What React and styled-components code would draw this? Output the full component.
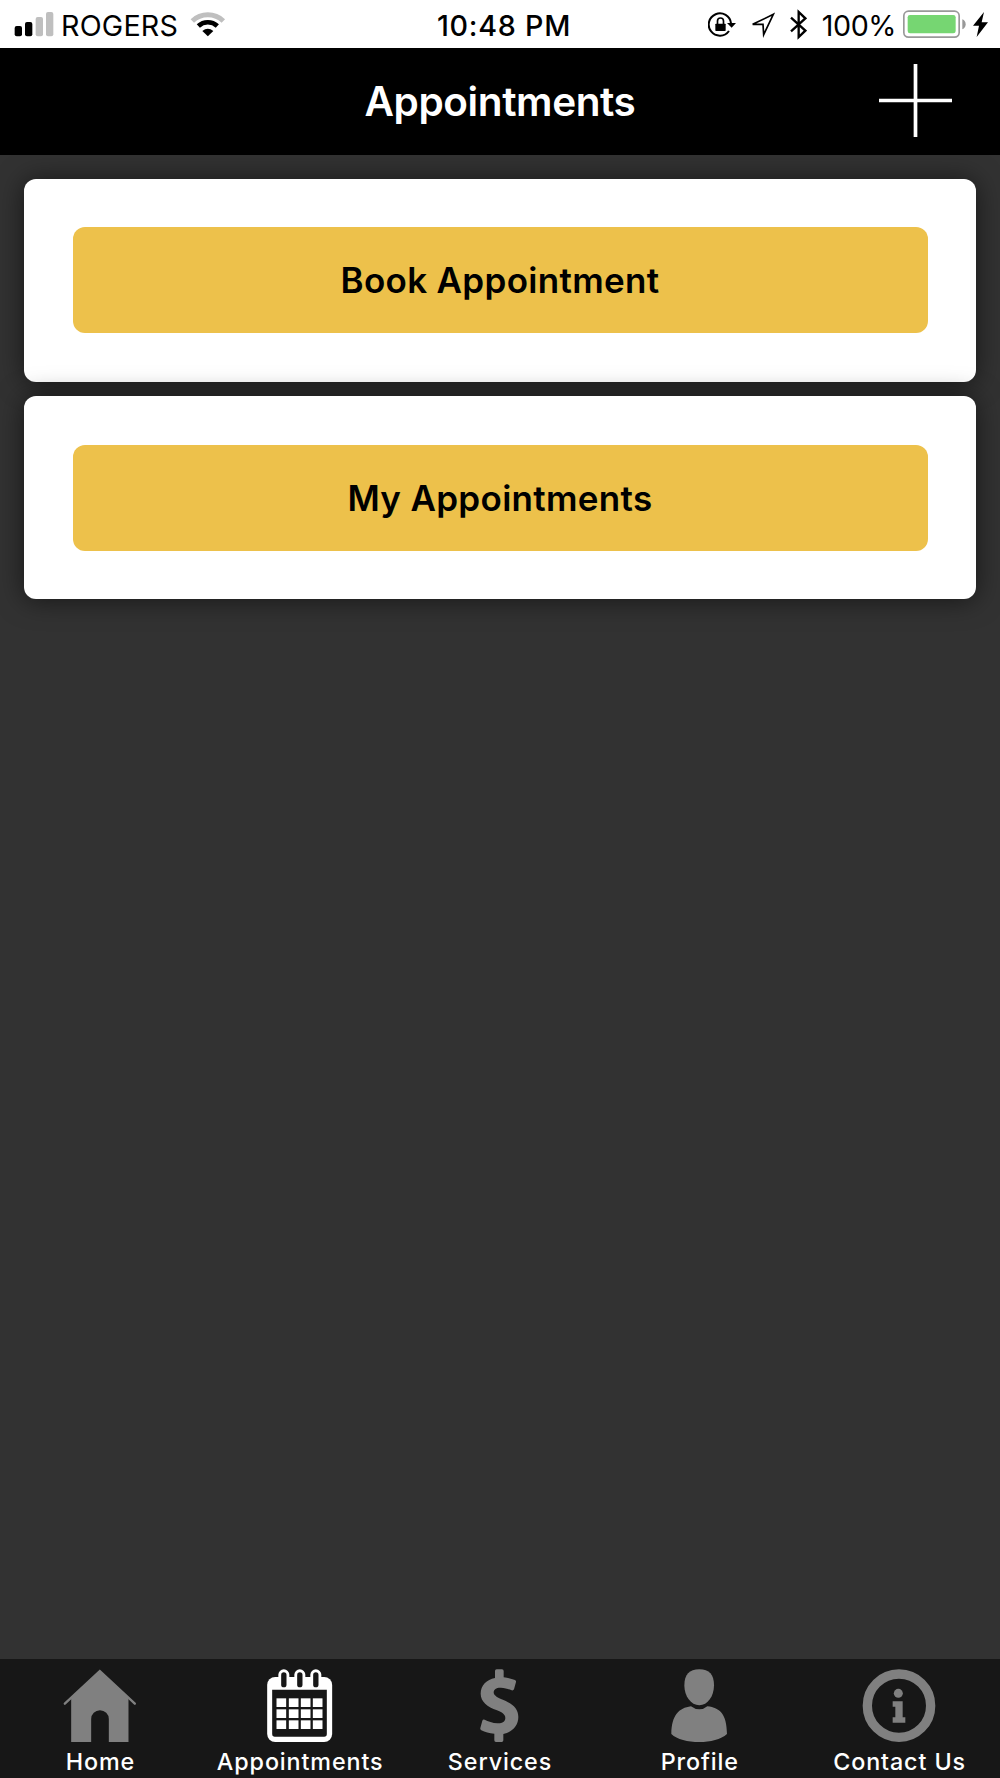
import styled, { createGlobalStyle } from "styled-components";

const GlobalStyle = createGlobalStyle`
  * {
    box-sizing: border-box;
  }

  body {
    margin: 0;
    background: #323232;
    font-family: "Inter", "Liberation Sans", sans-serif;
  }

  svg {
    display: block;
    flex-shrink: 0;
  }
`;

const Screen = styled.div`
  width: 1000px;
  height: 1778px;
  display: flex;
  flex-direction: column;
  overflow: hidden;
  background: #323232;
`;

const StatusBar = styled.div`
  height: 48px;
  flex-shrink: 0;
  display: grid;
  grid-template-columns: 1fr auto 1fr;
  padding: 0 12px 0 14px;
  background: #fff;
  color: #000;
`;

const StatusGroup = styled.div`
  display: flex;
  justify-content: ${(props) => (props.$end ? "flex-end" : "flex-start")};
`;

const StatusText = styled.span`
  padding-top: 2px;
  font-size: 28.7px;
  line-height: 48px;
  height: 48px;
  white-space: nowrap;
  font-weight: ${(props) => props.$weight || 400};
  letter-spacing: ${(props) => props.$spacing || "0"};
  margin: ${(props) => props.$margin || "0"};
`;

const StatusIcon = styled.svg`
  height: 48px;
  width: ${(props) => props.$width}px;
  margin-right: ${(props) => props.$gap || 0}px;
`;

const Header = styled.header`
  height: 106.7px;
  flex-shrink: 0;
  display: grid;
  grid-template-columns: 1fr auto 1fr;
  align-items: center;
  padding: 0 48px;
  background: #000;
`;

const Title = styled.h1`
  grid-column: 2;
  margin: 0;
  padding-top: 2px;
  color: #fff;
  font-size: 40.5px;
  line-height: 48px;
  font-weight: 600;
  letter-spacing: -0.4px;
`;

const AddButton = styled.button`
  justify-self: end;
  border: none;
  padding: 0;
  margin-bottom: 1px;
  background: none;
  color: #fff;
`;

const Content = styled.main`
  flex: 1;
  display: flex;
  flex-direction: column;
  gap: 14.6px;
  padding: 24px;
`;

const Card = styled.section`
  padding: 48.4px 48.5px;
  border-radius: 12px;
  background: #fff;
  box-shadow: 0 1px 27px rgba(0, 0, 0, 0.56);
`;

const CardButton = styled.button`
  display: block;
  width: 100%;
  height: 106.2px;
  padding: 0;
  border: none;
  border-radius: 12px;
  background: #edc14b;
  color: #000;
  font-family: inherit;
  font-size: 35px;
  font-weight: 600;
  line-height: 44px;
  letter-spacing: 0.32px;
`;

const TabBar = styled.nav`
  height: 119px;
  flex-shrink: 0;
  display: flex;
  background: #171717;
`;

const Tab = styled.a`
  flex: 0 0 199.8px;
  display: flex;
  flex-direction: column;
  align-items: center;
  padding-top: 9.5px;
  color: ${(props) => (props.$active ? "#fff" : "#808080")};
`;

const TabIcon = styled.svg`
  width: 73.33px;
  height: 73.33px;
`;

const TabLabel = styled.span`
  margin-top: 6px;
  padding-left: 1px;
  color: #fff;
  font-size: 23.3px;
  font-weight: 500;
  line-height: 28px;
  letter-spacing: 0.9px;
  white-space: nowrap;
`;

function HomeIcon() {
  return (
    <TabIcon viewBox="189.5 86 220 220" fill="currentColor">
      <path d="M214 173 L300 91 L386 173 V305 H327 V236 A26.5 26.5 0 0 0 274 236 V305 H214 Z" />
      <path
        d="M195 190 L300 92 L405 190"
        fill="none"
        stroke="currentColor"
        strokeWidth="7"
        strokeLinecap="round"
      />
    </TabIcon>
  );
}

function CalendarIcon() {
  return (
    <TabIcon viewBox="189.5 86 220 220" fill="currentColor">
      <rect x="202" y="110" width="195" height="195" rx="24" />
      {[252, 300, 348].map((x) => (
        <g key={x}>
          <rect x={x - 16.5} y="87" width="33" height="50" rx="16.5" />
          <rect x={x - 8} y="96" width="16" height="45" rx="8" fill="#171717" />
        </g>
      ))}
      <path
        fill="#171717"
        d="M217 148 H381 V281 Q381 289 373 289 H225 Q217 289 217 281 Z"
      />
      {[174, 207, 240].map((y) =>
        [230, 267, 303, 339].map((x) => (
          <rect key={`${x}-${y}`} x={x} y={y} width="29" height="26" />
        ))
      )}
    </TabIcon>
  );
}

function DollarIcon() {
  return (
    <TabIcon viewBox="189 86 220 220" fill="currentColor">
      <path d="M285 92 Q285 87 290 87 H306 Q311 87 311 92 V111 C323 112 335 115 345 119 Q349 121 348 125 L342 147 Q340 151 335 150 C325 146 315 143 303 142 C290 141 281 147 281 156 C281 164 289 170 303 176 C335 189 355 202 355 230 C355 256 337 275 310 281 V300 Q310 305 305 305 H288 Q283 305 283 300 V280 C268 279 255 276 244 270 Q240 268 241 263 L247 241 Q249 236 254 238 C264 243 278 248 292 249 C306 250 316 244 316 233 C316 222 306 216 291 210 C262 199 242 184 242 160 C242 136 260 117 285 113 Z" />
    </TabIcon>
  );
}

function ProfileIcon() {
  return (
    <TabIcon viewBox="188 86 220 220" fill="currentColor">
      <path d="M297 87 C327 87 341 103 341 135 C341 168 322 195 297 195 C272 195 252 168 252 135 C252 103 267 87 297 87 Z" />
      <path d="M272 198 Q283 207 297 207 Q311 207 321 198 C360 203 379 222 380 281 C362 297 330 305 297 305 C262 305 230 297 213 281 C214 225 235 203 272 198 Z" />
    </TabIcon>
  );
}

function InfoIcon() {
  return (
    <TabIcon viewBox="187 86 220 220" fill="currentColor">
      <circle cx="298" cy="196" r="95" fill="none" stroke="currentColor" strokeWidth="28" />
      <circle cx="296" cy="159" r="13.5" />
      <path d="M279 183 H309 V231 H317 V247 H279 V231 H287 V199 H279 Z" />
    </TabIcon>
  );
}

const tabs = [
  { label: "Home", Icon: HomeIcon },
  { label: "Appointments", Icon: CalendarIcon, active: true },
  { label: "Services", Icon: DollarIcon },
  { label: "Profile", Icon: ProfileIcon },
  { label: "Contact Us", Icon: InfoIcon },
];

export default function App() {
  return (
    <Screen>
      <GlobalStyle />

      <StatusBar>
        <StatusGroup>
          <StatusIcon viewBox="42 0 120 144" $width={40} $gap={7}>
            <rect x="44" y="78" width="22" height="31" rx="6" />
            <rect x="75" y="66" width="22" height="43" rx="6" />
            <rect x="107" y="51" width="22" height="58" rx="6" fill="#bfbfbf" />
            <rect x="138" y="36" width="22" height="73" rx="6" fill="#bfbfbf" />
          </StatusIcon>
          <StatusText $spacing="0.2px" $margin="0 12px 0 0">
            ROGERS
          </StatusText>
          <StatusIcon viewBox="570 0 108 144" $width={36}>
            <path
              d="M577 63 A67.5 67.5 0 0 1 670 63"
              fill="none"
              stroke="#bfbfbf"
              strokeWidth="15"
            />
            <path
              d="M595 78 A42 42 0 0 1 652 78"
              fill="none"
              stroke="#000"
              strokeWidth="14"
            />
            <path d="M623.5 109 L607 93 Q623.5 80 640 93 Z" />
          </StatusIcon>
        </StatusGroup>

        <StatusText $weight={500} $spacing="0.75px" $margin="0 0 0 6px">
          10:48 PM
        </StatusText>

        <StatusGroup $end>
          <StatusIcon viewBox="56 0 84 144" $width={28} $gap={15}>
            <path
              d="M119 93 A33.5 33.5 0 1 1 125 70"
              fill="none"
              stroke="#000"
              strokeWidth="6"
            />
            <path d="M113 69 H140 L127 83 Z" />
            <rect x="78" y="71" width="31" height="22" rx="2" />
            <path
              d="M84.5 72 V63 A9 9 0 0 1 102.5 63 V72"
              fill="none"
              stroke="#000"
              strokeWidth="5"
            />
          </StatusIcon>
          <StatusIcon viewBox="185 0 72 144" $width={24} $gap={14.3}>
            <path
              d="M190 73 L252 43 L223 104 L221 73 Z"
              fill="none"
              stroke="#000"
              strokeWidth="5"
            />
          </StatusIcon>
          <StatusIcon viewBox="299 0 51 144" $width={17} $gap={15}>
            <path
              d="M302 53 L345 92 L325 111 V36 L345 55 L302 94"
              fill="none"
              stroke="#000"
              strokeWidth="7"
            />
          </StatusIcon>
          <StatusText $spacing="-0.45px" $margin="0 7px 0 0">
            100%
          </StatusText>
          <StatusIcon viewBox="640 0 189 144" $width={63} $gap={7}>
            <rect
              x="642.5"
              y="33.5"
              width="166"
              height="78"
              rx="14"
              fill="none"
              stroke="#999"
              strokeWidth="5"
            />
            <rect x="654" y="45" width="144" height="55" rx="7" fill="#76d672" />
            <path d="M818 58 Q828 62 828 73 Q828 84 818 88 Z" fill="#999" />
          </StatusIcon>
          <StatusIcon viewBox="850 0 45 144" $width={15}>
            <path d="M883 36 L850 77 H868 L861 111 L895 67 H876 Z" />
          </StatusIcon>
        </StatusGroup>
      </StatusBar>

      <Header>
        <Title>Appointments</Title>
        <AddButton aria-label="Add appointment">
          <svg width="73" height="73" viewBox="0 0 73 73" stroke="currentColor" strokeWidth="3.7">
            <path d="M36.5 0 V73 M0 36.5 H73" />
          </svg>
        </AddButton>
      </Header>

      <Content>
        <Card>
          <CardButton>Book Appointment</CardButton>
        </Card>
        <Card>
          <CardButton>My Appointments</CardButton>
        </Card>
      </Content>

      <TabBar>
        {tabs.map(({ label, Icon, active }) => (
          <Tab key={label} $active={active}>
            <Icon />
            <TabLabel>{label}</TabLabel>
          </Tab>
        ))}
      </TabBar>
    </Screen>
  );
}
